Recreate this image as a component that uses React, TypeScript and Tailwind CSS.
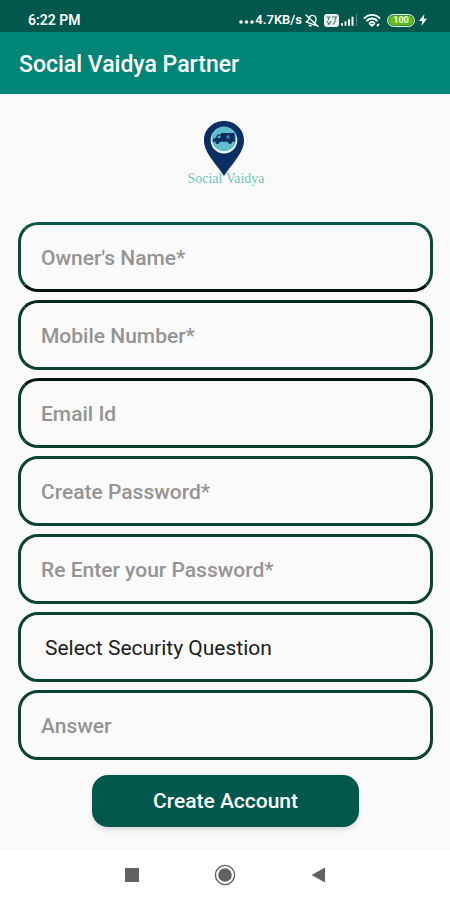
import { useState } from "react";
import clsx from "clsx";

interface Field {
	id: string;
	label: string;
	type: string;
	border: string;
}

const topFields: Field[] = [
	{
		id: "owner-name",
		label: "Owner's Name*",
		type: "text",
		border: "border-x-[#0b4837] border-t-[#0a5749] border-b-[#04120d]",
	},
	{
		id: "mobile",
		label: "Mobile Number*",
		type: "tel",
		border: "border-x-[#0b4030] border-t-[#06291d] border-b-[#0a4030]",
	},
	{
		id: "email",
		label: "Email Id",
		type: "email",
		border: "border-x-[#0b4030] border-t-[#04150f] border-b-[#0a4030]",
	},
	{
		id: "password",
		label: "Create Password*",
		type: "password",
		border: "border-[#0b4231]",
	},
	{
		id: "confirm-password",
		label: "Re Enter your Password*",
		type: "password",
		border: "border-[#0b4231]",
	},
];

const fieldBox =
	"h-[70px] w-full rounded-[20px] border-[3px] bg-[#fafafa] focus:outline-none";

const TextField: React.FC<{ field: Field }> = ({ field }) => (
	<input
		id={field.id}
		type={field.type}
		aria-label={field.label}
		placeholder={field.label}
		className={clsx(
			fieldBox,
			field.border,
			"px-5 pt-0.5 text-[21px] font-medium text-gray-800 placeholder:text-[#949494] placeholder:opacity-100",
		)}
	/>
);

const StatusBar = () => (
	<div className="flex h-8 items-center justify-between bg-[#00574b] pt-2 pr-[23px] pl-7 text-white">
		<span className="text-[14px] font-semibold">6:22 PM</span>
		<div className="flex items-center">
			<svg className="mt-1" width="16" height="4" viewBox="0 0 16 4" fill="currentColor">
				<circle cx="2" cy="2" r="1.8" />
				<circle cx="7.5" cy="2" r="1.8" />
				<circle cx="13" cy="2" r="1.8" />
			</svg>
			<span className="text-[13px] font-semibold">4.7KB/s</span>
			{/* muted bell */}
			<svg className="ml-0.5" width="16" height="15" viewBox="0 0 16 15" fill="none" stroke="currentColor" strokeWidth="1.4" strokeLinecap="round" strokeLinejoin="round">
				<g transform="rotate(20 8 7.500)">
					<path d="M3 10.800h10l-1.500-2V6C11.500 3.800 10 2.400 8 2.400S4.500 3.800 4.500 6v2.800L3 10.800zM7 13h2" />
				</g>
				<path d="M2 2l12 11.500" />
			</svg>
			{/* VoLTE */}
			<svg className="ml-1" width="15" height="13" viewBox="0 0 15 13">
				<rect width="15" height="13" rx="3" fill="#e6f2ef" />
				<path d="M2.500 3h4M4.500 3v3M8 3h4.500L10.500 6M3 7l2 3.500L7 7M9 10.500L12 6.500" fill="none" stroke="#4c7f76" strokeWidth="1.200" />
			</svg>
			{/* signal */}
			<svg className="ml-0.5" width="17" height="12" viewBox="0 0 17 12" fill="currentColor">
				<rect x="0" y="9" width="2" height="3" rx="1" />
				<rect x="3.500" y="7" width="2" height="5" rx="1" />
				<rect x="7" y="5" width="2" height="7" rx="1" />
				<rect x="10.500" y="2.500" width="2" height="9.500" rx="1" />
				<rect x="15" y="0" width="1.200" height="12" opacity=".3" />
			</svg>
			{/* wifi */}
			<svg className="ml-[5px]" width="18" height="14" viewBox="0 0 18 14" fill="none" stroke="currentColor" strokeWidth="1.900" strokeLinecap="round">
				<path d="M1.500 5C5.700 .8 12.300 .8 16.500 5M4 7.600c2.800-2.800 7.200-2.800 10 0M6.600 10c1.400-1.300 3.400-1.300 4.800 0" />
				<path d="M8.200 12h1.600L9 12.700zM14.500 12.500l1-1" />
			</svg>
			<div className="ml-1.5 flex h-[13px] w-7 items-center justify-center rounded-full border border-[#e3f4dc] bg-[#62bd22] text-[9px] leading-none font-bold text-[#eaffd8] ring-1 ring-[#3f8a45] ring-inset">
				100
			</div>
			<svg className="ml-1" width="8" height="12" viewBox="0 0 8 12" fill="currentColor">
				<path d="M5.500 0L0 7h3.300L2.300 12 8 4.700H4.600z" />
			</svg>
		</div>
	</div>
);

const Logo = () => (
	<div className="flex flex-col items-center pt-[27px]">
		<svg className="mr-0.5" width="40" height="55" viewBox="0 0 40 55">
			<path d="M20 0C8.800 0 0 8.600 0 19.400c0 6.600 3.400 12.400 8 19.200C12.500 45.200 17 50 20 55c3-5 7.500-9.800 12-16.400 4.600-6.800 8-12.600 8-19.200C40 8.600 31.200 0 20 0z" fill="#0b2f63" />
			<circle cx="20" cy="19.200" r="13.300" fill="#eef8fa" />
			<circle cx="20" cy="17.800" r="12.300" fill="#5fbccb" />
			{/* ambulance */}
			<path d="M9 20.800v-2.800l2.800-1.200 1.700-3.300h3.500V12h12.500c.8 0 1.300.5 1.300 1.300v7.500z" fill="#0b2f63" />
			<circle cx="13.500" cy="20.800" r="2.200" fill="#0b2f63" />
			<circle cx="26" cy="20.800" r="2.200" fill="#0b2f63" />
			<path d="M13.200 17l1.200-2.300h2V17z" fill="#5fbccb" />
			<path d="M24 14v4M22 16h4" stroke="#4b93b4" strokeWidth="1.200" />
		</svg>
		<span className="relative -mt-[5px] ml-0.5 font-['Liberation_Serif',serif] text-[14px] leading-4 text-[#6fc7b9]">
			Social Vaidya
		</span>
	</div>
);

const NavBar = () => (
	<nav className="flex h-[50px] items-center justify-center gap-[69px] bg-white text-[#626262]">
		<button type="button" aria-label="Recent apps" className="flex w-6 justify-center">
			<svg width="14" height="14" viewBox="0 0 14 14" fill="currentColor">
				<rect width="14" height="14" rx="0.500" />
			</svg>
		</button>
		<button type="button" aria-label="Home" className="flex w-6 justify-center">
			<svg width="22" height="22" viewBox="0 0 22 22">
				<circle cx="11" cy="11" r="9.600" fill="none" stroke="currentColor" strokeWidth="1.400" />
				<circle cx="11" cy="11" r="6.800" fill="currentColor" />
			</svg>
		</button>
		<button type="button" aria-label="Back" className="flex w-6 justify-center">
			<svg width="14" height="16" viewBox="0 0 14 16" fill="currentColor">
				<path d="M14 .5v15L.5 8z" />
			</svg>
		</button>
	</nav>
);

export default function App() {
	const [question, setQuestion] = useState("");

	return (
		<div className="flex min-h-screen flex-col bg-[#fafafa] font-[Roboto,sans-serif]">
			<StatusBar />
			<header className="flex h-[62px] items-center bg-[#008577] px-[19px] pt-1">
				<h1 className="text-[23px] font-medium text-white">Social Vaidya Partner</h1>
			</header>

			<main className="flex-1">
				<Logo />
				<form
					className="flex flex-col gap-2 pt-[35px] pr-[17px] pl-[18px]"
					onSubmit={(e) => e.preventDefault()}
				>
					{topFields.map((field) => (
						<TextField key={field.id} field={field} />
					))}
					<select
						id="security-question"
						aria-label="Security question"
						value={question}
						onChange={(e) => setQuestion(e.target.value)}
						className={clsx(
							fieldBox,
							"appearance-none border-[#0b4231] px-6 pt-1 text-[21px] text-[#202020]",
						)}
					>
						<option value="">Select Security Question</option>
					</select>
					<TextField
						field={{
							id: "answer",
							label: "Answer",
							type: "text",
							border: "border-[#0b4231]",
						}}
					/>
					<button
						type="submit"
						className="mx-auto mt-[7px] h-[52px] w-[267px] rounded-2xl bg-[#00574b] pt-0.5 text-[21px] font-medium text-white shadow-md"
					>
						Create Account
					</button>
				</form>
			</main>

			<NavBar />
		</div>
	);
}
